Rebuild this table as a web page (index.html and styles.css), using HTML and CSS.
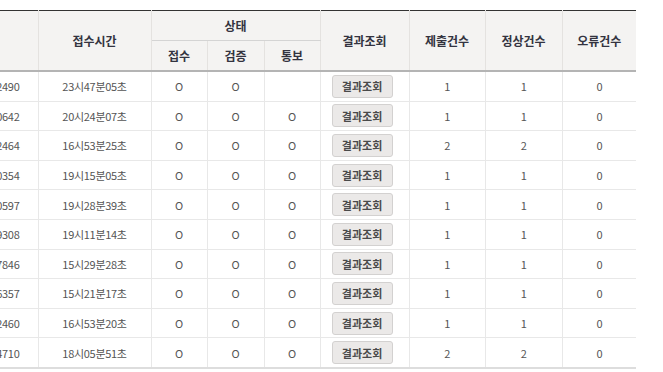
FILE: index.html
```html
<!DOCTYPE html>
<html lang="ko">
<head>
<meta charset="utf-8">
<link rel="stylesheet" href="styles.css">
</head>
<body>
<div class="wrap">
<table class="grid">
  <colgroup>
    <col class="c-id"><col class="c-time"><col class="c-st"><col class="c-st2"><col class="c-st"><col class="c-btn"><col class="c-n1"><col class="c-n2"><col class="c-n3">
  </colgroup>
  <thead>
    <tr class="h1">
      <th rowspan="2"></th>
      <th rowspan="2">접수시간</th>
      <th colspan="3" class="group">상태</th>
      <th rowspan="2">결과조회</th>
      <th rowspan="2">제출건수</th>
      <th rowspan="2">정상건수</th>
      <th rowspan="2">오류건수</th>
    </tr>
    <tr class="h2">
      <th>접수</th>
      <th>검증</th>
      <th>통보</th>
    </tr>
  </thead>
  <tbody>
    <tr><td>2019000012490</td><td>23시47분05초</td><td>O</td><td>O</td><td></td><td><button class="btn">결과조회</button></td><td>1</td><td>1</td><td>0</td></tr>
    <tr><td>2019000010642</td><td>20시24분07초</td><td>O</td><td>O</td><td>O</td><td><button class="btn">결과조회</button></td><td>1</td><td>1</td><td>0</td></tr>
    <tr><td>2019000012464</td><td>16시53분25초</td><td>O</td><td>O</td><td>O</td><td><button class="btn">결과조회</button></td><td>2</td><td>2</td><td>0</td></tr>
    <tr><td>2019000010354</td><td>19시15분05초</td><td>O</td><td>O</td><td>O</td><td><button class="btn">결과조회</button></td><td>1</td><td>1</td><td>0</td></tr>
    <tr><td>2019000010597</td><td>19시28분39초</td><td>O</td><td>O</td><td>O</td><td><button class="btn">결과조회</button></td><td>1</td><td>1</td><td>0</td></tr>
    <tr><td>2019000019308</td><td>19시11분14초</td><td>O</td><td>O</td><td>O</td><td><button class="btn">결과조회</button></td><td>1</td><td>1</td><td>0</td></tr>
    <tr><td>2019000017846</td><td>15시29분28초</td><td>O</td><td>O</td><td>O</td><td><button class="btn">결과조회</button></td><td>1</td><td>1</td><td>0</td></tr>
    <tr><td>2019000016357</td><td>15시21분17초</td><td>O</td><td>O</td><td>O</td><td><button class="btn">결과조회</button></td><td>1</td><td>1</td><td>0</td></tr>
    <tr><td>2019000012460</td><td>16시53분20초</td><td>O</td><td>O</td><td>O</td><td><button class="btn">결과조회</button></td><td>1</td><td>1</td><td>0</td></tr>
    <tr><td>2019000014710</td><td>18시05분51초</td><td>O</td><td>O</td><td>O</td><td><button class="btn">결과조회</button></td><td>2</td><td>2</td><td>0</td></tr>
  </tbody>
</table>
</div>
</body>
</html>
```

FILE: styles.css
```css
html, body {
  margin: 0;
  padding: 0;
  background: #ffffff;
}
body {
  font-family: "Noto Sans CJK KR", "Noto Sans", sans-serif;
  overflow: hidden;
}
.wrap {
  padding-top: 10px;
  width: 663px;
  height: 362px;
  overflow: hidden;
}
.grid {
  border-collapse: collapse;
  table-layout: fixed;
  margin-left: -74px;
  width: 710px;
  border-top: 1px solid #333333;
  border-bottom: 2px solid #dddddd;
}
.c-id { width: 112px; }
.c-time { width: 113px; }
.c-st { width: 56px; }
.c-st2 { width: 57px; }
.c-btn { width: 89px; }
.c-n1 { width: 76px; }
.c-n2 { width: 77px; }
.c-n3 { width: 74px; }

.grid th {
  background: #f4f3f2;
  color: #333340;
  font-size: 12px;
  font-weight: bold;
  height: 29px;
  padding: 0;
  border-left: 1px solid #e4e2e0;
  border-right: 1px solid #e4e2e0;
  line-height: 14px;
}
.grid th:first-child { border-left: none; }
.grid thead tr.h1 th:last-child { border-right: none; }
.grid th.group {
  border-bottom: 1px solid #d4d4d4;
}
.grid thead tr.h1 th[rowspan] {
  border-bottom: 2px solid #b4b4b4;
}
.grid thead tr.h2 th {
  border-bottom: 2px solid #b4b4b4;
}
.grid td {
  font-size: 11px;
  color: #555555;
  text-align: center;
  height: 28.6px;
  padding: 0;
  border: 1px solid #e8e8e8;
  border-top: none;
  letter-spacing: -0.3px;
  white-space: nowrap;
  overflow: hidden;
}
.grid td:first-child { border-left: none; }
.grid td:last-child { border-right: none; }
.grid tbody tr:last-child td { border-bottom: none; }

.btn {
  font-family: "Noto Sans CJK KR", "Noto Sans", sans-serif;
  font-size: 11px;
  font-weight: bold;
  color: #4a4a4a;
  letter-spacing: 0;
  width: 61px;
  height: 23px;
  padding: 0;
  margin-right: 5px;
  background: #ebe9e8;
  border: 1px solid #d3d1d0;
  border-radius: 3px;
  line-height: 20px;
}
```
